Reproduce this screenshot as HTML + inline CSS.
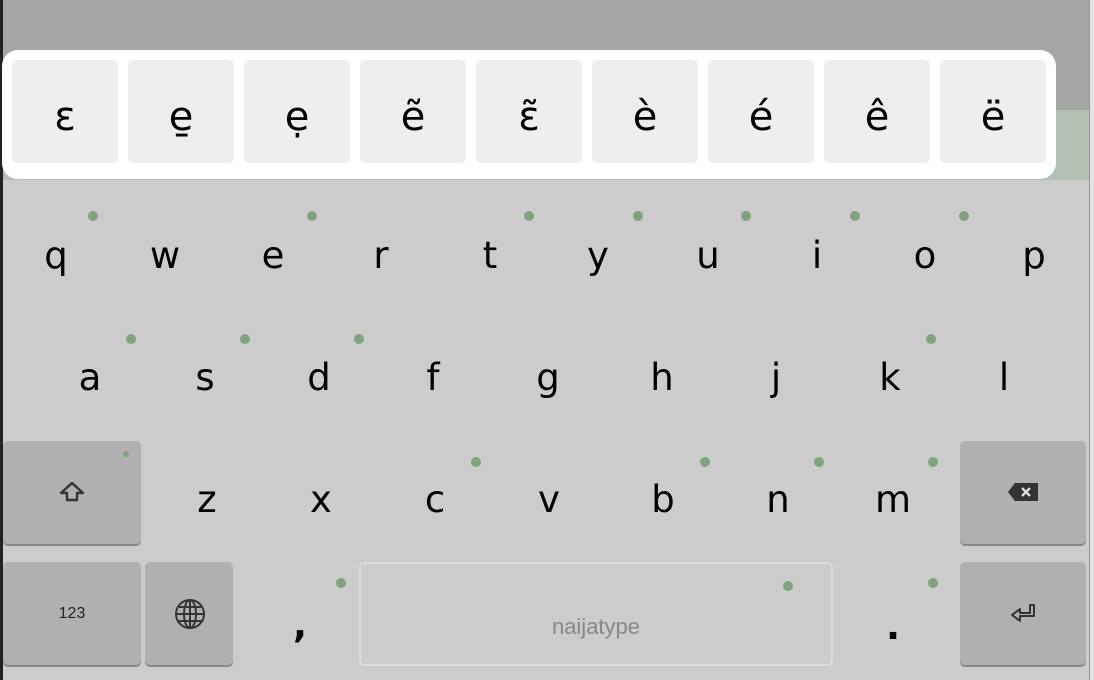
<!DOCTYPE html>
<html><head><meta charset="utf-8"><style>
*{margin:0;padding:0;box-sizing:border-box}
html,body{width:1094px;height:680px;overflow:hidden}
body{background:#cccccc;position:relative;font-family:"DejaVu Sans","Liberation Sans",sans-serif}
.a{position:absolute}
.top{left:0;top:0;width:1094px;height:110px;background:#a6a6a6}
.grn{left:0;top:110px;width:1094px;height:70px;background:#b3bfb3}
.strip{left:0;top:0;width:3px;height:680px;background:#222}
.right{left:1089px;top:0;width:5px;height:680px;background:#e4e4e4;border-left:1px solid #999}
.pop{left:2px;top:50px;width:1054px;height:129px;background:#fff;border-radius:16px}
.pk{top:60px;width:106px;height:103px;background:#eeeeee;border-radius:5px;text-align:center;line-height:115px;font-size:40px;color:#000}
.l{font-size:37px;color:#000;width:60px;text-align:center;height:50px;line-height:50px}
.d{width:10px;height:10px;border-radius:50%;background:#7fa27f}
.k{background:#b0b0b0;border-radius:5px;box-shadow:0 2px 0 #888}
</style></head><body>
<div class="a top"></div><div class="a grn"></div>
<div class="a right"></div>
<div class="a strip"></div>
<div class="a pop"></div>
<div class="a pk" style="left:12px">ɛ</div>
<div class="a pk" style="left:128px">e̱</div>
<div class="a pk" style="left:244px">ẹ</div>
<div class="a pk" style="left:360px">ẽ</div>
<div class="a pk" style="left:476px">ɛ̃</div>
<div class="a pk" style="left:592px">è</div>
<div class="a pk" style="left:708px">é</div>
<div class="a pk" style="left:824px">ê</div>
<div class="a pk" style="left:940px">ë</div>

<!-- row1 -->
<div class="a l" style="left:26px;top:231px">q</div>
<div class="a l" style="left:135px;top:231px">w</div>
<div class="a l" style="left:243px;top:231px">e</div>
<div class="a l" style="left:351px;top:231px">r</div>
<div class="a l" style="left:460px;top:231px">t</div>
<div class="a l" style="left:568px;top:231px">y</div>
<div class="a l" style="left:678px;top:231px">u</div>
<div class="a l" style="left:787px;top:231px">i</div>
<div class="a l" style="left:895px;top:231px">o</div>
<div class="a l" style="left:1004px;top:231px">p</div>
<div class="a d" style="left:88px;top:211px"></div>
<div class="a d" style="left:307px;top:211px"></div>
<div class="a d" style="left:524px;top:211px"></div>
<div class="a d" style="left:633px;top:211px"></div>
<div class="a d" style="left:741px;top:211px"></div>
<div class="a d" style="left:850px;top:211px"></div>
<div class="a d" style="left:959px;top:211px"></div>
<!-- row2 -->
<div class="a l" style="left:60px;top:353px">a</div>
<div class="a l" style="left:175px;top:353px">s</div>
<div class="a l" style="left:289px;top:353px">d</div>
<div class="a l" style="left:403px;top:353px">f</div>
<div class="a l" style="left:518px;top:353px">g</div>
<div class="a l" style="left:632px;top:353px">h</div>
<div class="a l" style="left:746px;top:353px">j</div>
<div class="a l" style="left:860px;top:353px">k</div>
<div class="a l" style="left:974px;top:353px">l</div>
<div class="a d" style="left:126px;top:334px"></div>
<div class="a d" style="left:240px;top:334px"></div>
<div class="a d" style="left:354px;top:334px"></div>
<div class="a d" style="left:926px;top:334px"></div>
<!-- row3 -->
<div class="a k" style="left:3px;top:441px;width:138px;height:103px"></div>
<div class="a" style="left:123px;top:451px;width:6px;height:6px;border-radius:50%;background:#7fa27f"></div>
<svg class="a" style="left:59px;top:480px" width="26" height="26" viewBox="0 0 26 26"><path d="M13 3 L2 13 H8 V20 H18 V13 H24 Z" fill="none" stroke="#333" stroke-width="2.4" stroke-linejoin="round"/></svg>
<div class="a l" style="left:177px;top:475px">z</div>
<div class="a l" style="left:291px;top:475px">x</div>
<div class="a l" style="left:405px;top:475px">c</div>
<div class="a l" style="left:519px;top:475px">v</div>
<div class="a l" style="left:633px;top:475px">b</div>
<div class="a l" style="left:748px;top:475px">n</div>
<div class="a l" style="left:863px;top:475px">m</div>
<div class="a d" style="left:471px;top:457px"></div>
<div class="a d" style="left:700px;top:457px"></div>
<div class="a d" style="left:814px;top:457px"></div>
<div class="a d" style="left:928px;top:457px"></div>
<div class="a k" style="left:960px;top:441px;width:126px;height:103px"></div>
<svg class="a" style="left:1007px;top:482px" width="32" height="20" viewBox="0 0 32 20"><path d="M8 1 H31 V19 H8 L1 10 Z" fill="#333"/><path d="M15 6 L23 14 M23 6 L15 14" stroke="#ddd" stroke-width="2.4"/></svg>
<!-- row4 -->
<div class="a k" style="left:3px;top:562px;width:138px;height:103px;text-align:center;line-height:103px;font-family:'Liberation Sans',sans-serif;font-size:16px;color:#222">123</div>
<div class="a k" style="left:145px;top:562px;width:88px;height:103px"></div>
<svg class="a" style="left:174px;top:598px" width="32" height="32" viewBox="0 0 32 32" fill="none" stroke="#333" stroke-width="2"><circle cx="16" cy="16" r="14"/><ellipse cx="16" cy="16" rx="6" ry="14"/><path d="M16 2V30M2 16H30M5 9H27M5 23H27"/></svg>
<div class="a l" style="left:270px;top:600px;font-weight:bold">,</div>
<div class="a d" style="left:336px;top:578px"></div>
<div class="a" style="left:359px;top:562px;width:474px;height:104px;border:2px solid #dddddd;border-radius:5px;text-align:center;line-height:126px;font-family:'Liberation Sans',sans-serif;font-size:22px;color:#888">naijatype</div>
<div class="a d" style="left:783px;top:581px"></div>
<div class="a l" style="left:863px;top:602px;font-weight:bold">.</div>
<div class="a d" style="left:928px;top:578px"></div>
<div class="a k" style="left:960px;top:562px;width:126px;height:103px"></div>
<svg class="a" style="left:1010px;top:603px" width="28" height="22" viewBox="0 0 28 22"><path d="M24 2 V13 H10 V18 L2 12 L10 6 V10 H20 V2 Z" fill="none" stroke="#333" stroke-width="2" stroke-linejoin="round"/></svg>
</body></html>
